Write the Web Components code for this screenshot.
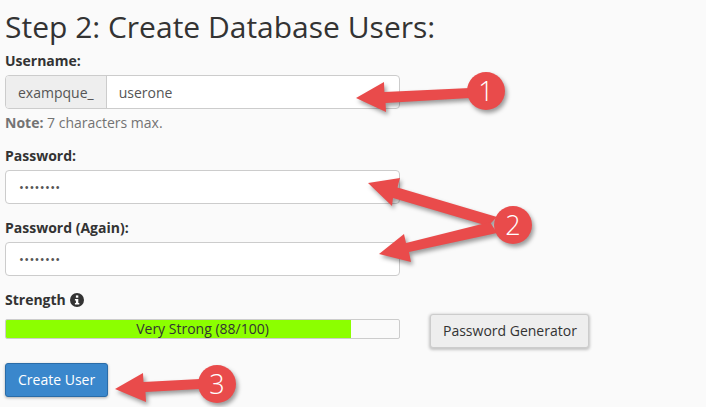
<!DOCTYPE html>
<html lang="en">
<head>
<meta charset="UTF-8">
<title>Create Database Users</title>
<style>
  html, body { margin: 0; background: #fafafa; }
  body { font-family: "Open Sans", sans-serif; color: #333; width: 706px; height: 407px; overflow: hidden; position: relative; }
</style>
<script>
  // Small helper: every element just stamps its html into an open shadow root
  const define = (name, html) => customElements.define(name, class extends HTMLElement {
    connectedCallback() {
      this.attachShadow({ mode: 'open' }).innerHTML = html(this);
    }
  });

  define('step-form', () => `
    <style>
      :host { display: flex; flex-direction: column; padding: 0 0 0 5px; width: 395px; }
    </style>
    <slot></slot>`);

  define('step-title', () => `
    <style>
      :host { display: block; font-size: 30px; line-height: 38px; height: 38px; padding-top: 8px; color: #333; white-space: nowrap; }
    </style>
    <slot></slot>`);

  define('form-field', el => `
    <style>
      :host { display: block; }
      label { display: block; font-size: 14px; font-weight: 700; line-height: 18px; color: #333; margin-bottom: 5px; }
    </style>
    <label>${el.getAttribute('label')}</label>
    <slot></slot>`);

  define('text-box', el => `
    <style>
      :host { display: flex; height: 34px; box-sizing: border-box; border: 1px solid #ccc; border-radius: 4px; background: #fff; font-size: 14px; color: #555; overflow: hidden; }
      .prefix { display: flex; align-items: center; padding: 0 12px; background: #eee; border-right: 1px solid #ccc; color: #555; }
      .value { display: flex; align-items: center; padding: 0 12px; }
      :host([secret]) .value { padding: 0 13px; font-size: 13px; letter-spacing: 0.3px; }
    </style>
    ${el.hasAttribute('prefix') ? `<span class="prefix">${el.getAttribute('prefix')}</span>` : ''}
    <span class="value"><slot></slot></span>`);

  define('help-note', () => `
    <style>
      :host { display: block; font-size: 14px; line-height: 18px; color: #737373; margin-top: 5px; }
    </style>
    <slot></slot>`);

  define('strength-row', () => `
    <style>
      :host { display: block; position: relative; }
      .head { display: flex; align-items: center; gap: 4px; font-size: 14px; font-weight: 700; line-height: 18px; color: #333; }
      .line { display: flex; align-items: flex-start; gap: 30px; width: 584px; margin-top: 5px; }
      .bar { flex: none; position: relative; width: 395px; height: 20px; margin-top: 5px; box-sizing: border-box; border: 1px solid #ccc; border-radius: 2px; background: #fafafa; overflow: hidden; }
      .fill { width: 87.8%; height: 100%; background: #8cff00; }
      .label { position: absolute; inset: 0; font-size: 14px; line-height: 18px; text-align: center; color: #333; white-space: nowrap; }
      svg { width: 14px; height: 14px; display: block; }
    </style>
    <div class="head">Strength
      <svg viewBox="0 0 14 14"><circle cx="7" cy="7" r="7" fill="#333"/><rect x="5.9" y="2.4" width="2.4" height="2.3" fill="#fff"/><path d="M4.9 6h3.4v4.1h1v1.4H4.9v-1.4h1V7.4h-1z" fill="#fff"/></svg>
    </div>
    <div class="line">
      <div class="bar"><div class="fill"></div><div class="label">Very Strong (88/100)</div></div>
      <slot></slot>
    </div>`);

  define('ui-button', el => `
    <style>
      :host { display: inline-block; flex: none; }
      button { display: block; font: 14px/18px "Open Sans", sans-serif; height: 34px; box-sizing: border-box; border-radius: 3px; padding: 0 12px; white-space: nowrap; }
      button { background: #eee; color: #333; border: 1px solid #ccc; box-shadow: 0 1px 3px 1px rgba(0,0,0,.22); width: 159px; }
      :host([primary]) button { background: #3a87cc; color: #fff; border: 1px solid #2a6ca8; box-shadow: 0 1px 3px rgba(0,0,0,.3); width: 103px; }
    </style>
    <button type="button"><slot></slot></button>`);

  // Red callout arrows that lie over the form
  define('callout-layer', () => `
    <style>
      :host { position: absolute; left: 0; top: 0; width: 706px; height: 407px; pointer-events: none; }
      svg { display: block; }
      .shape { fill: #e94b4b; filter: drop-shadow(2px 3px 2px rgba(0,0,0,.38)); }
      text { fill: #fff; font: 300 27px "Open Sans", sans-serif; text-anchor: middle; }
    </style>
    <svg width="706" height="407" viewBox="0 0 706 407">
      <g class="shape">
        <path d="M356 98 384 82 384.4 92 470 88 470 98 385.6 103 386 112Z"/>
        <circle cx="486" cy="91" r="19"/>
      </g>
      <g class="shape">
        <path d="M368 183 400 178 397.5 187.5 497 217 488 226 393 198 392 206Z"/>
        <path d="M379 254 404 234 406 243 490 222 497 233 409 252 411 262Z"/>
        <circle cx="513" cy="225" r="19"/>
      </g>
      <g class="shape">
        <path d="M115 389 143 373 143.5 382 200 379 200 389 145.5 392 146 402Z"/>
        <circle cx="217" cy="384" r="19"/>
      </g>
      <text x="486" y="101">1</text>
      <text x="513" y="235">2</text>
      <text x="217" y="394">3</text>
    </svg>`);
</script>
</head>
<body>
  <step-form>
    <step-title>Step 2: Create Database Users:</step-title>
    <form-field label="Username:" style="margin-top:6px">
      <text-box prefix="exampque_">userone</text-box>
    </form-field>
    <help-note><b>Note:</b> 7 characters max.</help-note>
    <form-field label="Password:" style="margin-top:15px">
      <text-box secret>••••••••</text-box>
    </form-field>
    <form-field label="Password (Again):" style="margin-top:15px">
      <text-box secret>••••••••</text-box>
    </form-field>
    <strength-row style="margin-top:15px"><ui-button>Password Generator</ui-button></strength-row>
    <div style="margin-top:15px"><ui-button primary>Create User</ui-button></div>
  </step-form>
  <callout-layer></callout-layer>
</body>
</html>
